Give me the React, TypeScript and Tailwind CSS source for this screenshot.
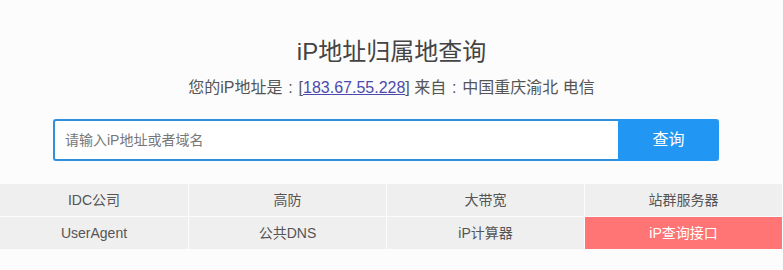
import { useState } from "react"

const links = [
  { label: "IDC公司" },
  { label: "高防" },
  { label: "大带宽" },
  { label: "站群服务器" },
  { label: "UserAgent" },
  { label: "公共DNS" },
  { label: "iP计算器" },
  { label: "iP查询接口", active: true },
]

// full-width colon, centred in its own em box like the original font draws it
function Colon() {
  return <span className="inline-block w-[16px] text-center">:</span>
}

export default function App() {
  const [query, setQuery] = useState("")

  return (
    <div className="h-[270px] w-[783px] bg-[#fcfcfc] font-['Liberation_Sans','Noto_Sans_CJK_SC',sans-serif] text-[#555]">
      <div className="flex flex-col items-center pt-[35px]">
        <h1 className="text-[24px] leading-[34px] text-[#444]">iP地址归属地查询</h1>
        <p className="mt-[7px] text-[16px] leading-[24px] text-[#555]">
          您的iP地址是<Colon />[
          <a href="#" className="text-[#4b4bab] underline">
            183.67.55.228
          </a>
          ] 来自<Colon />中国重庆渝北 电信
        </p>
      </div>

      <form className="mx-[53px] mt-[19px] flex h-[42px] w-[666px]" onSubmit={(e) => e.preventDefault()}>
        <input
          value={query}
          onChange={(e) => setQuery(e.target.value)}
          placeholder="请输入iP地址或者域名"
          className="h-full flex-1 rounded-l-[3px] border-2 border-r-0 border-[#2f8fdd] bg-white px-[10px] text-[14px] text-[#333] outline-none placeholder:text-[#777]"
        />
        <button type="submit" className="h-full w-[101px] rounded-r-[3px] bg-[#2196f3] text-[16px] text-white">
          查询
        </button>
      </form>

      <div className="mt-[23px] grid w-[782px] grid-cols-[188px_197px_197px_197px] gap-px">
        {links.map((item) => (
          <a
            key={item.label}
            href="#"
            className={
              item.active
                ? "flex h-[32px] items-center justify-center bg-[#ff7474] text-[14px] text-white"
                : "flex h-[32px] items-center justify-center bg-[#efefef] text-[14px] text-[#555]"
            }
          >
            {item.label}
          </a>
        ))}
      </div>
    </div>
  )
}
